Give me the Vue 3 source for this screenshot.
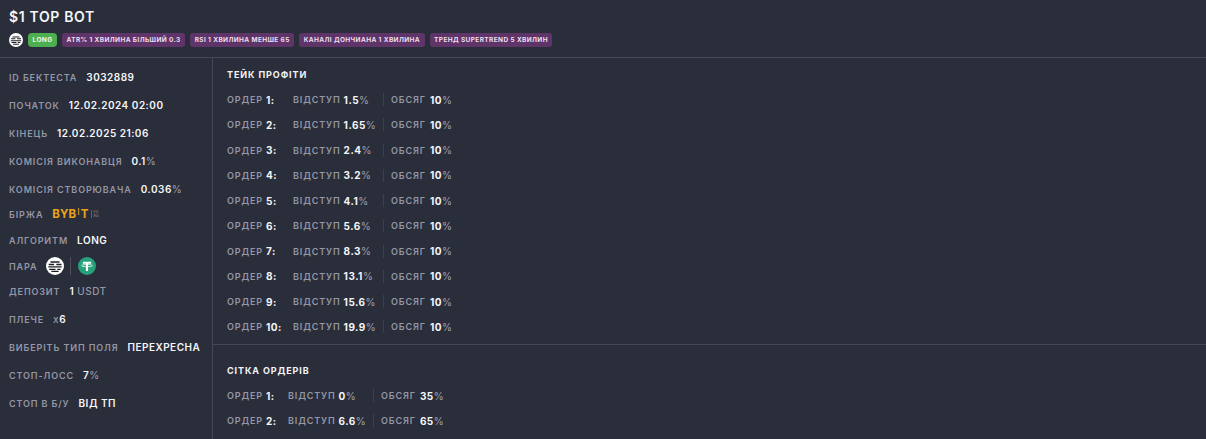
<script setup>
const tags = ['ATR% 1 ХВИЛИНА БІЛЬШИЙ 0.3', 'RSI 1 ХВИЛИНА МЕНШЕ 65', 'КАНАЛІ ДОНЧИАНА 1 ХВИЛИНА', 'ТРЕНД SUPERTREND 5 ХВИЛИН']
const info = [
  { k: 'ID БЕКТЕСТА', v: '3032889' },
  { k: 'ПОЧАТОК', v: '12.02.2024 02:00' },
  { k: 'КІНЕЦЬ', v: '12.02.2025 21:06' },
  { k: 'КОМІСІЯ ВИКОНАВЦЯ', v: '0.1', u: '%' },
  { k: 'КОМІСІЯ СТВОРЮВАЧА', v: '0.036', u: '%' },
]
const info2 = [
  { k: 'ДЕПОЗИТ', v: '1', u: ' USDT', tight: true },
  { k: 'ПЛЕЧЕ', p: 'x', v: '6' },
  { k: 'ВИБЕРІТЬ ТИП ПОЛЯ', v: 'ПЕРЕХРЕСНА' },
  { k: 'СТОП-ЛОСС', v: '7', u: '%' },
  { k: 'СТОП В Б/У', v: 'ВІД ТП' },
]
const tp = ['1.5', '1.65', '2.4', '3.2', '4.1', '5.6', '8.3', '13.1', '15.6', '19.9']
const grid = [{ o: '0', v: '35' }, { o: '6.6', v: '65' }]
</script>

<template>
  <div class="page">
    <header class="head">
      <h1 class="title">$1 TOP BOT</h1>
      <div class="tags">
        <svg class="coin-small" viewBox="0 0 20 20">
          <circle cx="10" cy="10" r="10" fill="#fff" />
          <path d="M5 5.6h10M3 8.3h6M11.5 8.3h5.7M2.6 11h14.8M3.6 13.7h7M12.5 13.7h3.6M6 16h8" stroke="#1c1e26" stroke-width="1.5" fill="none" />
        </svg>
        <span class="long">LONG</span>
        <span v-for="t in tags" :key="t" class="tag">{{ t }}</span>
      </div>
    </header>
    <div class="body">
      <aside class="side">
        <div v-for="r in info" :key="r.k" class="row">
          <span class="k">{{ r.k }}</span>
          <span class="v">{{ r.v }}<i v-if="r.u" class="u">{{ r.u }}</i></span>
        </div>
        <div class="row short exchange">
          <span class="k">БІРЖА</span>
          <span class="bybit">BYB<b class="bar">I</b>T<small class="mini">EU<br />RO</small></span>
        </div>
        <div class="row short">
          <span class="k">АЛГОРИТМ</span>
          <span class="v">LONG</span>
        </div>
        <div class="row short pair-row">
          <span class="k">ПАРА</span>
          <span class="pair">
            <svg class="coin" viewBox="0 0 20 20">
              <circle cx="10" cy="10" r="10" fill="#fff" />
              <path d="M5 5.6h10M3 8.3h6M11.5 8.3h5.7M2.6 11h14.8M3.6 13.7h7M12.5 13.7h3.6M6 16h8" stroke="#1c1e26" stroke-width="1.5" fill="none" />
            </svg>
            <i class="pair-sep"></i>
            <svg class="coin" viewBox="0 0 20 20">
              <circle cx="10" cy="10" r="10" fill="#26a17b" />
              <path d="M5.4 5.4h9.2v2.1h-3.4v8h-2.4v-8H5.4z" fill="#fff" />
              <ellipse cx="10" cy="9.6" rx="6" ry="1.3" fill="none" stroke="#fff" stroke-width=".8" />
            </svg>
          </span>
        </div>
        <div v-for="r in info2" :key="r.k" class="row">
          <span class="k">{{ r.k }}</span>
          <span class="v"><i v-if="r.p" class="u">{{ r.p }}</i>{{ r.v }}<i v-if="r.u" class="u">{{ r.u }}</i></span>
        </div>
      </aside>
      <main class="main">
        <section class="sec first">
          <h2 class="sec-title">ТЕЙК ПРОФІТИ</h2>
          <div v-for="(o, i) in tp" :key="i" class="order">
            <span class="c1"><span class="k">ОРДЕР</span><span class="v">{{ i + 1 }}:</span></span>
            <span class="c2"><span class="k">ВІДСТУП</span><span class="v">{{ o }}<i class="u">%</i></span></span>
            <span class="c3"><span class="k">ОБСЯГ</span><span class="v">10<i class="u">%</i></span></span>
          </div>
        </section>
        <section class="sec second">
          <h2 class="sec-title">СІТКА ОРДЕРІВ</h2>
          <div v-for="(o, i) in grid" :key="i" class="order">
            <span class="c1"><span class="k">ОРДЕР</span><span class="v">{{ i + 1 }}:</span></span>
            <span class="c2"><span class="k">ВІДСТУП</span><span class="v">{{ o.o }}<i class="u">%</i></span></span>
            <span class="c3"><span class="k">ОБСЯГ</span><span class="v">{{ o.v }}<i class="u">%</i></span></span>
          </div>
        </section>
      </main>
    </div>
  </div>
</template>

<style>
html, body { background: #2a2d3a; }
</style>

<style scoped>
.page {
  width: 1206px;
  height: 439px;
  overflow: hidden;
  background: #2a2d3a;
  font-family: Inter, "Liberation Sans", sans-serif;
  color: #fff;
}
.head {
  height: 49px;
  padding: 8px 9px 0;
  border-bottom: 1px solid #464955;
}
.title {
  margin: 0;
  font-size: 14px;
  line-height: 17px;
  font-weight: 600;
  letter-spacing: 0.65px;
  color: #f4f6f8;
}
.tags {
  display: flex;
  align-items: center;
  gap: 5px;
  margin-top: 8px;
}
.coin-small { width: 14px; height: 14px; }
.long, .tag {
  height: 14px;
  line-height: 14px;
  border-radius: 3px;
  font-size: 6.5px;
  font-weight: 700;
  letter-spacing: 0.39px;
  white-space: nowrap;
  color: #ecdff0;
}
.long {
  width: 29px;
  text-align: center;
  background: #4caf50;
  color: #eef8ee;
  border-radius: 4px;
}
.tag {
  background: #5f3468;
  padding: 0 4.5px;
}
.body { display: flex; height: 381px; }
.side {
  width: 203px;
  flex: none;
  border-right: 1px solid #464955;
  padding: 5px 0 0 9px;
}
.row {
  display: flex;
  align-items: center;
  gap: 9px;
  height: 28px;
  white-space: nowrap;
}
.row.short { height: 26px; }
.exchange { margin-top: -2px; }
.pair-row { margin-bottom: -2px; }
.k {
  font-size: 9px;
  font-weight: 600;
  letter-spacing: 0.88px;
  color: #9497a6;
}
.v {
  font-size: 10px;
  font-weight: 600;
  letter-spacing: 0.5px;
  color: #f5f6f8;
}
.u { font-style: normal; font-weight: 500; color: #9497a6; }
.bybit {
  display: flex;
  align-items: center;
  font-size: 11.5px;
  font-weight: 700;
  letter-spacing: 0.1px;
  color: #e9a319;
}
.bar { font-weight: 400; font-size: 9px; margin: -5px 1px 0; }
.mini {
  font-size: 3.5px;
  line-height: 4px;
  font-weight: 500;
  color: #8b8e9b;
  margin-left: 2px;
  padding-left: 2px;
  border-left: 1px solid #5d606b;
}
.pair { display: flex; align-items: center; gap: 6px; }
.coin { width: 18px; height: 18px; }
.pair-sep { width: 1px; height: 18px; background: #4d505c; margin-right: 1px; }
.main { flex: 1; }
.sec { padding-left: 14px; }
.first { height: 287px; border-bottom: 1px solid #464955; padding-top: 11px; box-sizing: border-box; }
.second { padding-top: 20px; }
.sec-title {
  margin: 0 0 6px;
  font-size: 9px;
  line-height: 12px;
  font-weight: 700;
  letter-spacing: 0.9px;
  color: #f2f3f6;
}
.order {
  display: flex;
  align-items: center;
  height: 25.25px;
  white-space: nowrap;
}
.c1, .c2, .c3 { display: flex; align-items: center; gap: 3px; }
.c1 { width: 66px; }
.c2 { width: 90px; border-right: 1px solid #3d404c; height: 13px; }
.c3 { padding-left: 7px; gap: 4px; }
.second .c1 { width: 61px; }
.second .c2 { width: 85px; }
.order .v { font-weight: 700; }
</style>
